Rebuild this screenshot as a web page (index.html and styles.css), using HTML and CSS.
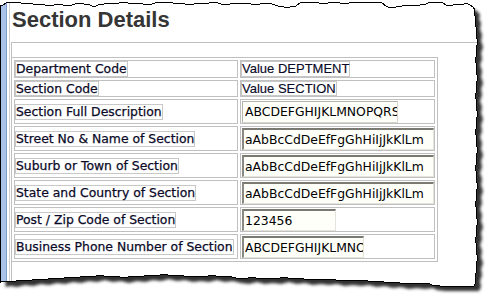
FILE: index.html
```html
<!DOCTYPE html>
<html>
<head>
<meta charset="utf-8">
<title>Section Details</title>
<link rel="stylesheet" href="styles.css">
</head>
<body>
<div class="page">
  <div class="strip"></div>
  <div class="main">
    <h1 class="title">Section Details</h1>
    <div class="frame">
      <table class="details">
        <colgroup><col class="c-label"><col class="c-value"></colgroup>
        <tr class="r-short">
          <td><span class="lbl">Department Code</span></td>
          <td><span class="val">Value DEPTMENT</span></td>
        </tr>
        <tr class="r-short r-two">
          <td><span class="lbl">Section Code</span></td>
          <td><span class="val">Value SECTION</span></td>
        </tr>
        <tr class="r-tall">
          <td><span class="lbl">Section Full Description</span></td>
          <td><input class="tb flat w156" type="text" value="ABCDEFGHIJKLMNOPQRSTUVWXYZ"></td>
        </tr>
        <tr class="r-tall">
          <td><span class="lbl">Street No &amp; Name of Section</span></td>
          <td><input class="tb w192" type="text" value="aAbBcCdDeEfFgGhHiIjJkKlLm"></td>
        </tr>
        <tr class="r-tall">
          <td><span class="lbl">Suburb or Town of Section</span></td>
          <td><input class="tb w192" type="text" value="aAbBcCdDeEfFgGhHiIjJkKlLm"></td>
        </tr>
        <tr class="r-tall">
          <td><span class="lbl">State and Country of Section</span></td>
          <td><input class="tb w192" type="text" value="aAbBcCdDeEfFgGhHiIjJkKlLm"></td>
        </tr>
        <tr class="r-tall">
          <td><span class="lbl">Post / Zip Code of Section</span></td>
          <td><input class="tb w94" type="text" value="123456"></td>
        </tr>
        <tr class="r-tall">
          <td><span class="lbl">Business Phone Number of Section</span></td>
          <td><input class="tb w122" type="text" value="ABCDEFGHIJKLMNOPQRS"></td>
        </tr>
      </table>
    </div>
  </div>
</div>

<svg class="tear" width="494" height="299" viewBox="0 0 494 299" aria-hidden="true">
  <defs>
    <path id="paper" d="M0.5,6 L3,5 L6,3 L10,2 L14,3 L18,2 L24,4 L30,3 L36,5 L42,4 L48,6 L54,5 L60,4 L66,6 L72,5 L78,3 L84,4 L90,5 L94,7 L98,5 L104,4 L110,3 L116,4 L122,2 L128,3 L134,4 L140,3 L146,5 L152,4 L158,2 L164,3 L170,2 L176,4 L182,3 L188,5 L194,4 L200,3 L206,4 L212,2 L218,3 L224,5 L230,4 L236,3 L242,4 L248,3 L254,5 L260,4 L266,3 L272,4 L278,6 L284,7 L290,7 L296,6 L300,3 L304,2 L310,3 L316,2 L322,4 L328,3 L334,2 L340,3 L346,4 L352,2 L358,3 L364,2 L370,3 L376,2 L382,3 L386,6 L390,8 L396,7 L402,6 L408,5 L414,6 L420,5 L426,4 L430,2 L436,3 L442,2 L446,5 L450,6 L456,4 L462,5 L466,3 L470,5 L473,7 L475,10 L474,14 L476,18 L475,24 L477,30 L476,36 L478,42 L476,48 L477,54 L475,60 L477,66 L476,72 L478,78 L476,84 L477,90 L475,96 L477,102 L476,108 L478,114 L476,120 L477,126 L475,132 L477,138 L476,144 L478,150 L476,156 L477,162 L475,168 L477,174 L476,180 L478,186 L476,192 L477,198 L475,204 L477,210 L476,216 L478,222 L476,228 L477,234 L475,240 L477,246 L476,252 L478,258 L476,264 L477,270 L475,276 L476,282 L474,286 L468,286 L460,286 L450,286 L440,286 L432,285 L428,283 L420,284 L412,283 L404,284 L396,282 L388,283 L380,281 L372,282 L364,280 L356,281 L348,280 L340,281 L332,279 L324,280 L316,279 L308,280 L300,278 L292,279 L284,277 L276,279 L268,278 L260,279 L252,277 L244,279 L236,278 L228,276 L220,277 L212,275 L204,277 L196,276 L188,277 L180,275 L172,276 L164,274 L156,276 L148,275 L140,277 L132,276 L124,278 L116,276 L108,277 L100,275 L92,277 L84,276 L76,278 L68,277 L60,279 L52,278 L44,280 L36,279 L28,281 L20,280 L12,282 L6,281 L0.5,282 Z"/>
    <mask id="outside" maskUnits="userSpaceOnUse" x="0" y="0" width="494" height="299">
      <rect x="0" y="0" width="494" height="299" fill="#fff"/>
      <use href="#paper" fill="#000"/>
    </mask>
    <filter id="soft" x="-5%" y="-5%" width="110%" height="110%">
      <feGaussianBlur stdDeviation="1.8"/>
    </filter>
  </defs>
  <g mask="url(#outside)">
    <rect x="0" y="0" width="494" height="299" fill="#fff"/>
    <use href="#paper" transform="translate(5,5)" fill="#333" filter="url(#soft)"/>
  </g>
  <use href="#paper" fill="none" stroke="#000" stroke-width="1" shape-rendering="crispEdges"/>
</svg>
</body>
</html>
```

FILE: styles.css
```css
html, body {
  margin: 0;
  padding: 0;
  background: #fff;
}

.page {
  display: flex;
  width: 494px;
  height: 299px;
  overflow: hidden;
}

.strip {
  width: 5px;
  flex: none;
  background: #a9c3e8;
  border-left: 1px solid #222;
  border-right: 1px solid #7f9dcf;
}

.main {
  flex: 1;
  display: flex;
  flex-direction: column;
  margin-left: 2px;
  border-left: 1px solid #cfcfcf;
  padding-top: 7px;
}

.title {
  margin: 0 0 10px 2px;
  font-family: "Liberation Sans", Arial, sans-serif;
  font-weight: bold;
  font-size: 22px;
  line-height: 25px;
  color: #353535;
}

.frame {
  flex: 1;
  margin-left: 1px;
  border-top: 1px solid #c0c0c0;
  border-left: 1px solid #c0c0c0;
  padding-top: 14px;
}

.details {
  table-layout: fixed;
  width: 426px;
  border-collapse: separate;
  border-spacing: 2px;
  border: 1px solid #c0c0c0;
  border-left: none;
  font-size: 0;
  line-height: 0;
}

.c-label { width: 224px; }
.c-value { width: 195px; }

.details td {
  padding: 0;
  border: 1px solid #c0c0c0;
  vertical-align: middle;
  white-space: nowrap;
  overflow: hidden;
}

.r-tall td { height: 23px; }

.lbl {
  display: block;
  width: max-content;
  border: 1px solid #c8c8c8;
  font-family: "DejaVu Sans", Verdana, sans-serif;
  font-size: 12.4px;
  line-height: 14px;
  color: #0a0a28;
  -webkit-text-stroke: 0.25px #0a0a28;
}

.r-two .lbl,
.r-two .val { line-height: 13px; }

.val {
  display: block;
  width: max-content;
  border: 1px solid #c8c8c8;
  font-family: "Liberation Sans", Arial, sans-serif;
  font-size: 13px;
  line-height: 14px;
  color: #0a0a28;
  -webkit-text-stroke: 0.15px #0a0a28;
}

.tb {
  display: block;
  box-sizing: border-box;
  height: 22px;
  margin: 0 0 0 1px;
  padding: 0 0 0 1px;
  font-family: "DejaVu Sans", Verdana, sans-serif;
  font-size: 12.4px;
  color: #000;
  background: #fffffa;
  border-style: solid;
  border-width: 2px 1px 1px 2px;
  border-color: #7a7a72 #e6e4da #e6e4da #8a8a82;
  outline: none;
}

.tb.flat {
  border-width: 1px;
  border-color: #b4b4ac #d8d6cc #d8d6cc #b4b4ac;
  padding-left: 2px;
}

.w156 { width: 156px; }
.w192 { width: 192px; }
.w94 { width: 94px; }
.w122 { width: 122px; }

.tear {
  position: absolute;
  left: 0;
  top: 0;
  pointer-events: none;
}
```
